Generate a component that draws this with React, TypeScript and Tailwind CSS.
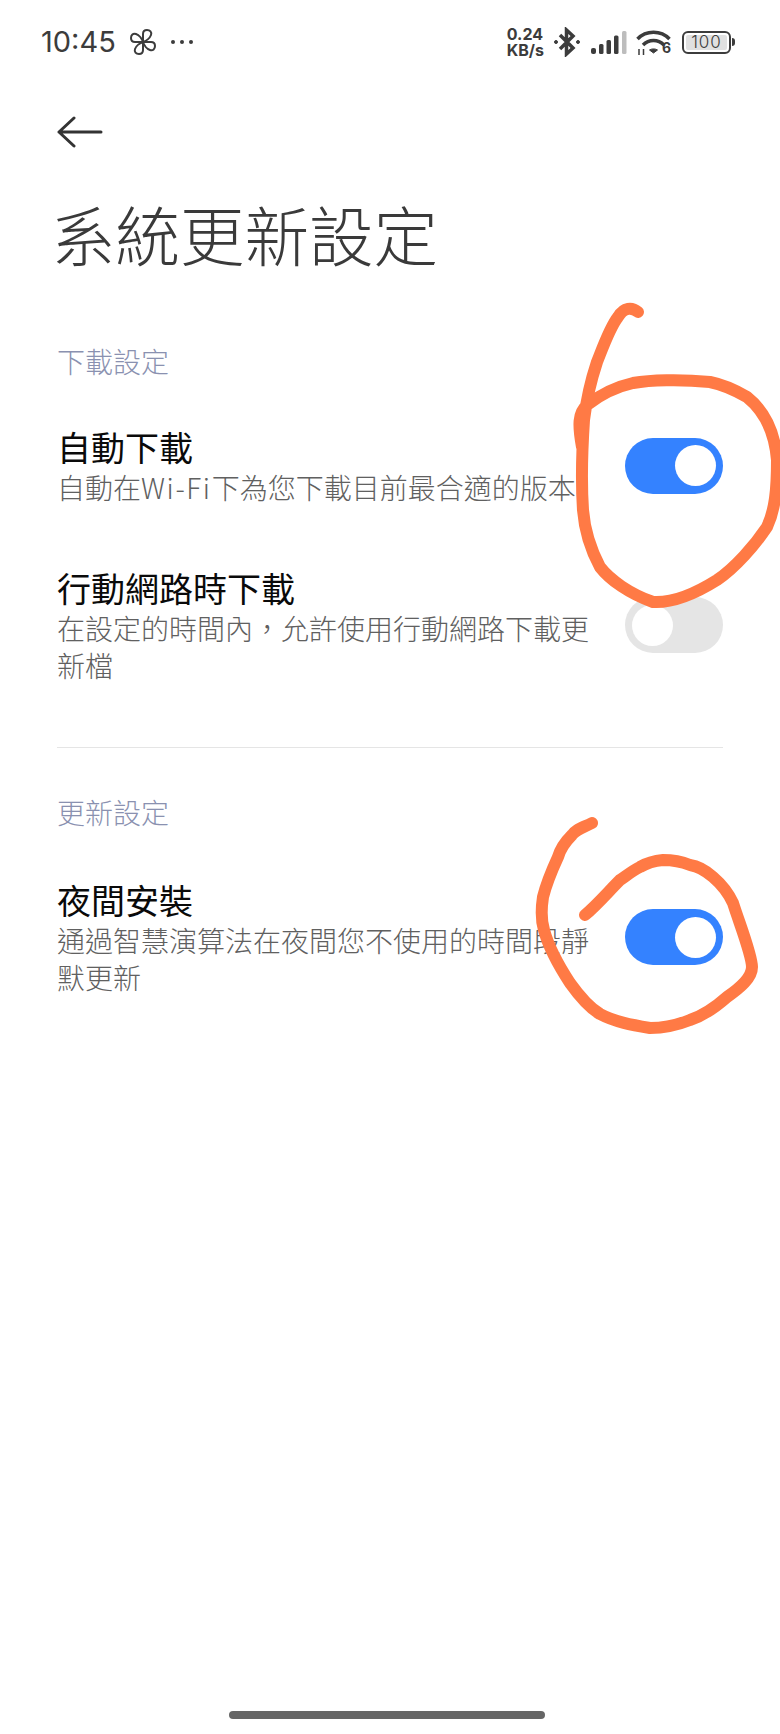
import type { ReactNode } from "react";

const CJK = "font-['Noto_Sans_CJK_TC','Noto_Sans',sans-serif]";

function Toggle({ on }: { on: boolean }) {
  return (
    <div
      className={`flex h-[56px] w-[98px] shrink-0 items-center rounded-full px-[7px] ${
        on ? "justify-end bg-[#3482ff]" : "justify-start bg-[#e5e5e5]"
      }`}
    >
      <div className="h-[41px] w-[41px] rounded-full bg-white" />
    </div>
  );
}

function Row({ title, sub, on, className }: { title: string; sub: ReactNode; on: boolean; className: string }) {
  return (
    <div className={`flex items-center justify-between ${className}`}>
      <div className="w-[540px]">
        <div className="text-[34px] leading-[44px] font-normal text-[#0a0a0a]">{title}</div>
        <div className="text-[28px] leading-[37px] font-light text-[#606060]">{sub}</div>
      </div>
      <Toggle on={on} />
    </div>
  );
}

function StatusBar() {
  return (
    <div className="flex h-[84px] items-center justify-between pr-[45px] pl-[41px] text-[#3c3c3c]">
      <div className="flex items-center">
        <span className="font-['Inter',sans-serif] text-[29px] font-normal">10:45</span>
        <svg className="ml-[14px]" width="26" height="26" viewBox="0 0 26 26" fill="none" stroke="#3c3c3c" strokeWidth="2" strokeLinejoin="round">
          <path d="M13 13V5C13 2 15 1 17 1 20 1 22 3 21 6 20 9 16 12 13 13Z" />
          <path d="M13 13V5C13 2 15 1 17 1 20 1 22 3 21 6 20 9 16 12 13 13Z" transform="rotate(90 13 13)" />
          <path d="M13 13V5C13 2 15 1 17 1 20 1 22 3 21 6 20 9 16 12 13 13Z" transform="rotate(180 13 13)" />
          <path d="M13 13V5C13 2 15 1 17 1 20 1 22 3 21 6 20 9 16 12 13 13Z" transform="rotate(270 13 13)" />
        </svg>
        <div className="ml-[15px] flex gap-[5px]">
          <span className="h-[4px] w-[4px] rounded-full bg-[#3c3c3c]" />
          <span className="h-[4px] w-[4px] rounded-full bg-[#3c3c3c]" />
          <span className="h-[4px] w-[4px] rounded-full bg-[#3c3c3c]" />
        </div>
      </div>
      <div className="flex items-center">
        <div className="font-['Inter',sans-serif] text-[16px] leading-[16px] font-bold">
          <div>0.24</div>
          <div>KB/s</div>
        </div>
        <svg className="ml-[9px]" width="28" height="30" viewBox="0 0 28 30" fill="none" stroke="#3c3c3c" strokeWidth="3.500">
          <path d="M7 8 20 21 13.500 27V3L20 9 7 22" />
          <circle cx="3" cy="15" r="1.500" fill="#3c3c3c" strokeWidth="1" />
          <circle cx="25" cy="15" r="1.500" fill="#3c3c3c" strokeWidth="1" />
        </svg>
        <svg className="ml-[10px]" width="36" height="23" viewBox="0 0 36 23">
          <rect x="0" y="17" width="5" height="6" rx="2" fill="#3c3c3c" />
          <rect x="8" y="13" width="4.500" height="10" rx="1.500" fill="#3c3c3c" />
          <rect x="15.500" y="9" width="4.500" height="14" rx="1.500" fill="#3c3c3c" />
          <rect x="23" y="4.500" width="4.500" height="18.500" rx="1.500" fill="#3c3c3c" />
          <rect x="31" y="0" width="4.500" height="23" rx="1.500" fill="#bdbdbd" />
        </svg>
        <div className="relative ml-[9px] h-[25px] w-[35px]">
          <svg width="35" height="25" viewBox="0 0 35 25" fill="none" stroke="#3c3c3c" strokeWidth="3.500">
            <path d="M1.500 9C10 0 25 0 33.500 9" />
            <path d="M7 15C13 9 22 9 28 15" />
            <path d="M13.500 20C16 18.500 19 18.500 21.500 20L17.500 23Z" fill="#3c3c3c" strokeWidth="1" />
            <path d="M3 25V19M7.500 25V19" strokeWidth="1.500" />
          </svg>
          <span className="absolute right-0 bottom-0 font-['Inter',sans-serif] text-[14px] leading-[14px] font-bold">6</span>
        </div>
        <div className="ml-[11px] flex items-center">
          <div className="flex h-[23px] w-[49px] items-center justify-center rounded-[6px] border-2 border-[#3c3c3c] p-[2px]">
            <div className="flex h-full w-full items-center justify-center rounded-[2px] bg-[#e0e0e0] font-['Inter',sans-serif] text-[17px] leading-none font-light tracking-[1px]">
              100
            </div>
          </div>
          <div className="ml-[1px] h-[8px] w-[3px] rounded-r-full bg-[#3c3c3c]" />
        </div>
      </div>
    </div>
  );
}

export default function App() {
  return (
    <div lang="zh-TW" className={`relative h-[1734px] w-[780px] overflow-hidden bg-white ${CJK}`}>
      <StatusBar />

      <svg className="mt-[32px] ml-[57px]" width="46" height="32" viewBox="0 0 46 32" fill="none" stroke="#333" strokeWidth="3" strokeLinecap="round" strokeLinejoin="round">
        <path d="M44 16H2M17 2 2 16 17 30" />
      </svg>

      <h1 className="mt-[45px] pl-[51px] text-[64.500px] leading-[80px] font-light text-[#3a3a3a]">系統更新設定</h1>

      <div className="px-[57px]">
        <div className="mt-[70px] text-[28px] leading-[36px] font-light text-[#8a91b0]">下載設定</div>
        <Row
          className="mt-[46px]"
          title="自動下載"
          sub={
            <>
              自動在<span className="inline-block leading-[37px] tracking-[1.6px]">Wi-Fi</span>下為您下載目前最合適的版本
            </>
          }
          on
        />
        <Row className="mt-[60px]" title="行動網路時下載" sub="在設定的時間內，允許使用行動網路下載更新檔" on={false} />
        <div className="mt-[63px] h-px bg-[#e5e5e5]" />
        <div className="mt-[46px] text-[28px] leading-[36px] font-light text-[#8a91b0]">更新設定</div>
        <Row className="mt-[48px]" title="夜間安裝" sub="通過智慧演算法在夜間您不使用的時間段靜默更新" on />
      </div>

      {/* hand drawn circles on top of the screenshot */}
      <svg className="absolute top-0 left-0" width="780" height="1734" viewBox="0 0 780 1734" fill="none" stroke="#ff7a45" strokeWidth="12" strokeLinecap="round" strokeLinejoin="round">
        <path d="M638 312C632 307 624 307 618 317 610 327 603 347 597 362 592 377 587 395 584 420 582 450 581 480 583 510 585 535 592 552 600 567 610 580 630 594 653 602 670 603 690 597 717 580 735 568 755 545 767 527 775 510 777 490 777 460 775 435 767 413 747 397 735 390 725 385 710 382 680 379 650 380 633 383 615 387 600 395 587 405 578 413 578 425 582 447" />
        <path d="M592 823C582 828 575 830 572 835 565 842 560 850 558 857 552 870 546 885 543 897 541 910 541 920 544 930 548 945 555 960 570 983 580 997 590 1008 600 1014 615 1022 632 1025 650 1028 665 1028 680 1024 690 1020 705 1015 718 1005 727 997 740 988 752 978 752 967 752 955 740 925 733 903 727 890 720 883 713 877 705 870 697 866 690 865 680 861 670 860 663 860 652 861 645 864 640 867 632 871 626 876 620 880 608 892 597 905 585 915" />
      </svg>

      <div className="absolute bottom-[15px] left-[229px] h-[8px] w-[316px] rounded-full bg-[#666]" />
    </div>
  );
}
